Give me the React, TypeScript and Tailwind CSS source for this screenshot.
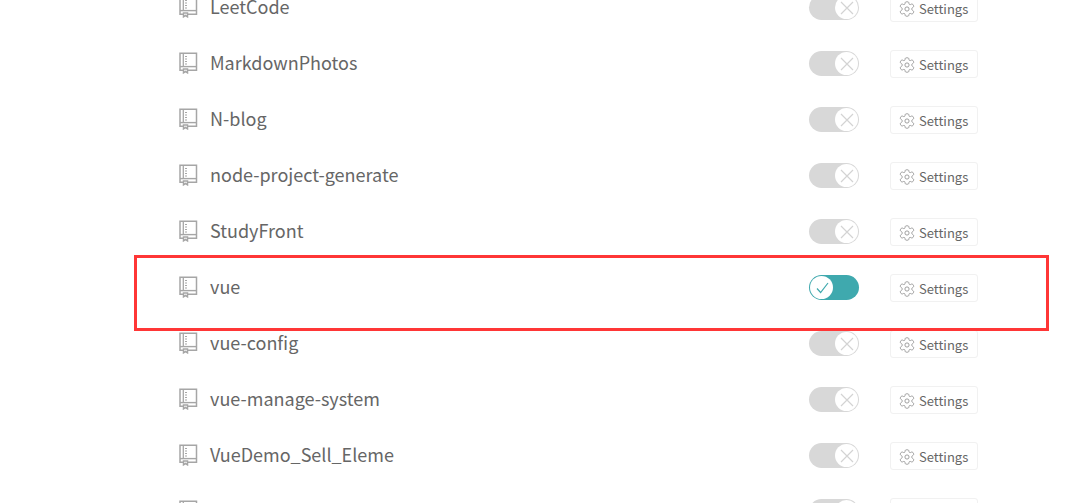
import { useState } from 'react';

type Repo = { name: string; active?: boolean; highlighted?: boolean };

const repos: Repo[] = [
  { name: 'LeetCode' },
  { name: 'MarkdownPhotos' },
  { name: 'N-blog' },
  { name: 'node-project-generate' },
  { name: 'StudyFront' },
  { name: 'vue', active: true, highlighted: true },
  { name: 'vue-config' },
  { name: 'vue-manage-system' },
  { name: 'VueDemo_Sell_Eleme' },
  { name: '' },
];

function RepoIcon() {
  return (
    <svg className="h-[22px] w-[19px] shrink-0" viewBox="0 0 19 22" fill="none" stroke="#a6a6a6" aria-hidden="true">
      <path d="M9 18.300H17.500V1.300H1V18.300H4" strokeWidth="1.5" />
      <path d="M1 14.600h16.500" strokeWidth="1.4" />
      <path d="M4.300 1.300v13.300" strokeWidth="1.3" />
      <path d="M6 4.500h2M6 7h2M6 9.500h2M6 12h2" strokeWidth="1.2" />
      <path d="M4.500 17h4v3.800l-2-1.300-2 1.300z" strokeWidth="1.5" />
    </svg>
  );
}

function GearIcon() {
  return (
    <svg className="size-4 shrink-0" viewBox="0 0 16 16" fill="none" stroke="#949494" strokeWidth="0.9" strokeLinejoin="round" aria-hidden="true">
      <path d="M6 2.600C6 1.100 6.600.8 8 .8s2 .3 2 1.800c0 .8.9 1.300 1.600.9 1.300-.8 2-.6 2.700.6.7 1.200.5 1.800-.8 2.500-.9.5-.9 2.300 0 2.800 1.300.7 1.500 1.300.8 2.500-.7 1.200-1.400 1.400-2.700.6-.7-.4-1.600.1-1.600.9 0 1.500-.6 1.800-2 1.800s-2-.3-2-1.800c0-.8-.9-1.300-1.600-.9-1.300.8-2 .6-2.700-.6-.7-1.200-.5-1.800.8-2.500.9-.5.9-2.300 0-2.800C1.200 5.900 1 5.300 1.700 4.100c.7-1.200 1.400-1.400 2.700-.6.7.4 1.600-.1 1.600-.9z" />
      <circle cx="8" cy="8" r="2.1" />
    </svg>
  );
}

function Toggle({ label, initial }: { label: string; initial: boolean }) {
  const [on, setOn] = useState(initial);
  return (
    <label
      className={
        on
          ? 'flex h-[25px] w-[50px] shrink-0 cursor-pointer items-center justify-start rounded-full bg-[#3fa9ae] px-px'
          : 'flex h-[25px] w-[50px] shrink-0 cursor-pointer items-center justify-end rounded-full bg-[#d8d8d8] px-px'
      }
    >
      <input type="checkbox" className="sr-only" aria-label={label} checked={on} onChange={() => setOn(!on)} />
      <span className="size-[23px] rounded-full bg-white">
        <svg className="size-[23px]" viewBox="0 0 23 23" fill="none" aria-hidden="true">
          {on ? (
            <path d="M7 12.500l3.600 4L18 7" stroke="#3fa9ae" strokeWidth="1.2" />
          ) : (
            <path d="M6 6l12 12M18 6l-12 12" stroke="#d3d3d3" strokeWidth="1.2" />
          )}
        </svg>
      </span>
    </label>
  );
}

function RepoRow({ name, active = false, highlighted = false }: Repo) {
  return (
    <li className="relative flex h-14 items-center pr-[106px] pl-[179px]">
      <RepoIcon />
      <span className="mb-0.5 ml-3 flex-1 text-lg leading-6">{name}</span>
      <Toggle label={name} initial={active} />
      <button
        type="button"
        className="mt-0.5 ml-[31px] flex h-7 w-[88px] items-center gap-1 rounded-[3px] border border-[#f1f1f1] pt-px pl-2 text-[13px] leading-5"
      >
        <GearIcon />
        Settings
      </button>
      {highlighted && (
        <div className="pointer-events-none absolute -top-1 right-[35px] left-[134px] z-10 h-[76px] border-3 border-[#ff3636]" />
      )}
    </li>
  );
}

export default function App() {
  return (
    <main className="h-screen overflow-hidden bg-white font-['Noto_Sans_CJK_SC',sans-serif] text-[#666]">
      <ul className="-mt-[21px]">
        {repos.map((repo, index) => (
          <RepoRow key={index} {...repo} />
        ))}
      </ul>
    </main>
  );
}
